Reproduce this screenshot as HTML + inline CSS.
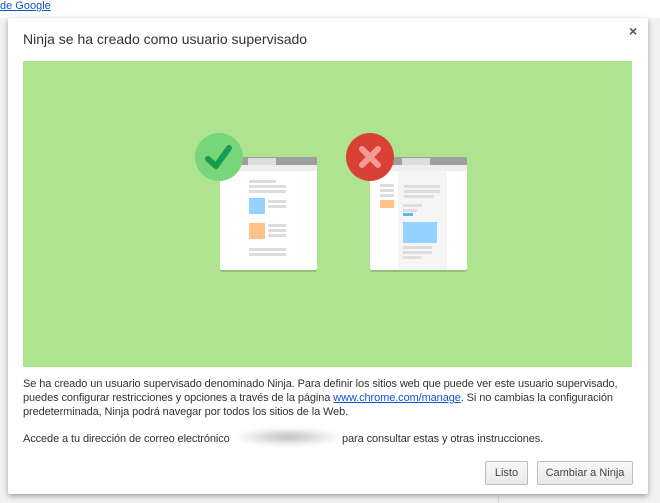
<!DOCTYPE html><html><head><style>
body{margin:0;width:660px;height:503px;background:#f2f2f2;font-family:"Liberation Sans",sans-serif;position:relative;overflow:hidden}
.a{position:absolute}
.dlg{left:8px;top:18px;width:640px;height:476px;background:#fff;box-shadow:0 2px 6px rgba(0,0,0,.35);border-radius:2px}
.t{font-size:11px;color:#333;left:23px;width:620px;line-height:14px}
.btn{border:1px solid #bbb;border-radius:2px;background:linear-gradient(#f8f8f8,#e8e8e8);font-size:11px;color:#444;text-align:center;line-height:22px;height:22px;top:461px}
.l{background:#ddd;height:3px}
</style></head><body>
<div class="a" style="left:0;top:0;width:660px;height:18px;background:#fff"></div>
<div class="a" style="left:0;top:0;font-size:11px;color:#15c;text-decoration:underline">de Google</div>
<div class="a" style="left:498px;top:18px;width:1px;height:485px;background:#ddd"></div>
<div class="a dlg"></div>
<div class="a" style="left:23px;top:31px;font-size:14px;color:#333">Ninja se ha creado como usuario supervisado</div>
<div class="a" style="left:629px;top:23px;font-size:14px;color:#555;font-weight:bold">×</div>
<div class="a" style="left:23px;top:61px;width:609px;height:306px;background:#aee48f"></div>
<div class="a" style="left:220px;top:157px;width:97px;height:113px;background:#fff;border-radius:2px;box-shadow:0 2px 0 #8fc47a"></div>
<div class="a" style="left:220px;top:157px;width:97px;height:8px;background:#9e9e9e;border-radius:2px 2px 0 0"></div>
<div class="a" style="left:248px;top:158px;width:28px;height:7px;background:#ddd"></div>
<div class="a" style="left:220px;top:165px;width:97px;height:6px;background:#eee"></div>
<div class="a l" style="left:249px;top:180px;width:27px"></div>
<div class="a l" style="left:249px;top:185px;width:37px"></div>
<div class="a l" style="left:249px;top:190px;width:37px"></div>
<div class="a" style="left:249px;top:198px;width:16px;height:16px;background:#94d3ff"></div>
<div class="a l" style="left:268px;top:200px;width:18px"></div>
<div class="a l" style="left:268px;top:205px;width:18px"></div>
<div class="a" style="left:249px;top:223px;width:16px;height:16px;background:#ffc28a"></div>
<div class="a l" style="left:268px;top:224px;width:18px"></div>
<div class="a l" style="left:268px;top:229px;width:18px"></div>
<div class="a l" style="left:268px;top:234px;width:18px"></div>
<div class="a l" style="left:249px;top:248px;width:37px"></div>
<div class="a l" style="left:249px;top:253px;width:37px"></div>
<svg class="a" style="left:195px;top:133px" width="48" height="48"><circle cx="24" cy="24" r="24" fill="#78d67a"/><path d="M13 26 L21 33 L34 15" stroke="#1a9a50" stroke-width="6" fill="none" stroke-linecap="round" stroke-linejoin="round"/></svg>
<div class="a" style="left:370px;top:157px;width:97px;height:113px;background:#fff;border-radius:2px;box-shadow:0 2px 0 #8fc47a"></div>
<div class="a" style="left:398px;top:171px;width:49px;height:99px;background:#f5f5f5"></div>
<div class="a" style="left:370px;top:157px;width:97px;height:8px;background:#9e9e9e;border-radius:2px 2px 0 0"></div>
<div class="a" style="left:402px;top:158px;width:28px;height:7px;background:#ddd"></div>
<div class="a" style="left:370px;top:165px;width:97px;height:6px;background:#eee"></div>
<div class="a l" style="left:380px;top:184px;width:14px"></div>
<div class="a l" style="left:380px;top:189px;width:14px"></div>
<div class="a l" style="left:380px;top:194px;width:14px"></div>
<div class="a" style="left:380px;top:200px;width:14px;height:8px;background:#ffc28a"></div>
<div class="a l" style="left:404px;top:185px;width:36px"></div>
<div class="a l" style="left:404px;top:190px;width:36px"></div>
<div class="a l" style="left:404px;top:195px;width:30px"></div>
<div class="a l" style="left:403px;top:204px;width:19px"></div>
<div class="a l" style="left:403px;top:209px;width:14px"></div>
<div class="a" style="left:403px;top:213px;width:10px;height:3px;background:#5cb8f5"></div>
<div class="a" style="left:403px;top:222px;width:34px;height:21px;background:#94d3ff"></div>
<div class="a l" style="left:403px;top:246px;width:29px"></div>
<div class="a l" style="left:403px;top:251px;width:29px"></div>
<div class="a l" style="left:403px;top:256px;width:18px"></div>
<svg class="a" style="left:346px;top:133px" width="48" height="48"><circle cx="24" cy="24" r="24" fill="#d94134"/><path d="M16 16 L32 32 M32 16 L16 32" stroke="#f59a95" stroke-width="6" stroke-linecap="round"/></svg>
<div class="a t" style="top:377px;letter-spacing:-0.1px">Se ha creado un usuario supervisado denominado Ninja. Para definir los sitios web que puede ver este usuario supervisado, puedes configurar restricciones y opciones a través de la página <span style="color:#15c;text-decoration:underline">www.chrome.com/manage</span>. Si no cambias la configuración predeterminada, Ninja podrá navegar por todos los sitios de la Web.</div>
<div class="a t" style="top:432px;letter-spacing:-0.1px">Accede a tu dirección de correo electrónico</div>
<div class="a" style="left:236px;top:428px;width:104px;height:18px;background:radial-gradient(ellipse at center,#bbb 0%,#e6e6e6 45%,#fff 75%);filter:blur(2px)"></div>
<div class="a t" style="top:432px;left:342px;width:300px;letter-spacing:-0.1px">para consultar estas y otras instrucciones.</div>
<div class="a btn" style="left:485px;width:41px">Listo</div>
<div class="a btn" style="left:537px;width:94px">Cambiar a Ninja</div>
</body></html>
